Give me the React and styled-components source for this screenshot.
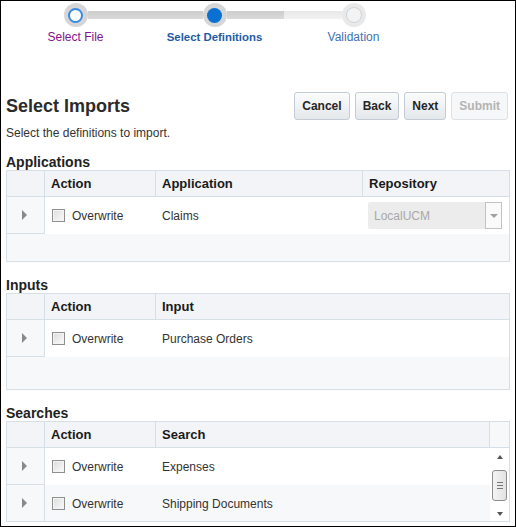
import React from 'react';
import styled, { createGlobalStyle, css } from 'styled-components';

const GlobalStyle = createGlobalStyle`
  body { margin: 0; background: #fff; }
  * { box-sizing: border-box; }
`;

const Frame = styled.div`
  width: 516px;
  height: 527px;
  border: 1px solid #000;
  padding: 0 5px;
  overflow: hidden;
  background: #fff;
  font-family: "Liberation Sans", Arial, sans-serif;
  color: #333;
  font-size: 12px;
`;

// ---- train (wizard steps)
const Train = styled.ol`
  display: flex;
  list-style: none;
  margin: 0;
  padding: 2px 0 0 0;
`;

const Stop = styled.li`
  width: 139px;
  display: flex;
  flex-direction: column;
  align-items: center;
`;

const Track = styled.div`
  width: 100%;
  display: flex;
  align-items: center;
`;

const HalfLine = styled.div`
  flex: 1;
  height: 8px;
  background: ${p =>
    p.$tone === 'done'
      ? 'linear-gradient(#cdcdcd, #d9d9d9)'
      : p.$tone === 'todo'
      ? 'linear-gradient(#e9e9e9, #f1f1f1)'
      : 'transparent'};
`;

const Knob = styled.div`
  width: 24px;
  height: 24px;
  border-radius: 50%;
  background: ${p => (p.$state === 'todo' ? '#e9e9e9' : '#d6d6d6')};
  display: flex;
  align-items: center;
  justify-content: center;
  flex: none;
`;

const Dot = styled.div`
  border-radius: 50%;
  ${p =>
    p.$state === 'visited' &&
    css`
      width: 15px;
      height: 15px;
      background: #fff;
      border: 2px solid #3b8ae0;
    `}
  ${p =>
    p.$state === 'current' &&
    css`
      width: 15px;
      height: 15px;
      background: #0a70d2;
    `}
  ${p =>
    p.$state === 'todo' &&
    css`
      width: 16px;
      height: 16px;
      background: #f3f3f3;
      border: 1px solid #cbd3db;
    `}
`;

const StopLabel = styled.div`
  margin-top: 3px;
  line-height: 14px;
  font-size: ${p => (p.$state === 'current' ? '11.4px' : '12px')};
  font-weight: ${p => (p.$state === 'current' ? 'bold' : 'normal')};
  color: ${p =>
    p.$state === 'visited' ? '#85128a' : p.$state === 'current' ? '#1d5ca4' : '#3f71b2'};
  white-space: nowrap;
`;

// ---- toolbar
const HeaderBar = styled.div`
  margin-top: 48px;
  height: 28px;
  display: flex;
  align-items: center;
  justify-content: space-between;
`;

const Title = styled.h1`
  margin: 0;
  font-size: 18px;
  font-weight: bold;
  color: #2b2b2b;
`;

const ButtonGroup = styled.div`
  display: flex;
  gap: 5px;
  margin-right: 2px;
`;

const Button = styled.button`
  height: 28px;
  padding: 0 7px;
  border: 1px solid ${p => (p.disabled ? '#dde2e6' : '#c3ccd4')};
  border-radius: 3px;
  background: ${p => (p.disabled ? '#f6f7f8' : 'linear-gradient(#fbfcfc, #e4e8eb)')};
  font-family: inherit;
  font-size: 12px;
  font-weight: bold;
  color: ${p => (p.disabled ? '#b3b3b3' : '#262626')};
`;

const Description = styled.p`
  margin: 6px 0 0;
  line-height: 14px;
  font-size: 12px;
  color: #333;
`;

const SectionTitle = styled.h2`
  margin: ${p => (p.$first ? '14px' : '15px')} 0 0;
  font-size: 14px;
  line-height: 16px;
  font-weight: bold;
  color: #222;
`;

// ---- tables
const Table = styled.div`
  border: 1px solid #d6dfe6;
  background: #f7f8fa;
`;

const HeadRow = styled.div`
  display: grid;
  grid-template-columns: ${p => p.$cols};
  height: 26px;
  background: #f2f4f7;
  border-bottom: 1px solid #d6dfe6;
`;

const HeadCell = styled.div`
  display: flex;
  align-items: center;
  padding-left: 6px;
  font-size: 13px;
  font-weight: bold;
  color: #1a1a1a;
  border-right: ${p => (p.$last ? 'none' : '1px solid #d6dfe6')};
  background: ${p => (p.$blank ? '#f7f8fa' : 'transparent')};
`;

const Row = styled.div`
  display: grid;
  grid-template-columns: ${p => p.$cols};
  height: 37px;
  background: ${p => (p.$striped ? '#f7f8fa' : '#fff')};
`;

const ExpandCell = styled.div`
  display: flex;
  align-items: center;
  justify-content: center;
  background: #f7f8fa;
  border-right: 1px solid #d6dfe6;
  border-bottom: 1px solid #d6dfe6;
  padding-right: 2px;
`;

const Disclose = styled.span`
  width: 0;
  height: 0;
  border-top: 5px solid transparent;
  border-bottom: 5px solid transparent;
  border-left: 5px solid #8a8a8a;
`;

const Cell = styled.div`
  display: flex;
  align-items: center;
  padding-left: ${p => p.$pad || '6px'};
  color: #333;
  font-size: 12px;
`;

const Check = styled.span`
  width: 13px;
  height: 13px;
  border: 1px solid #8e8f8f;
  background: linear-gradient(135deg, #dcdcdc, #fbfbfb);
  box-shadow: inset 0 0 0 1px #f4f4f4;
  margin-right: 7px;
  flex: none;
`;

const Filler = styled.div`
  height: ${p => p.$h}px;
`;

const Select = styled.div`
  flex: 1;
  margin-right: 7px;
  height: 27px;
  display: flex;
  align-items: center;
  justify-content: space-between;
  background: #ececec;
  border-radius: 2px;
  color: #a8a8a8;
  padding-left: 6px;
`;

const SelectButton = styled.span`
  width: 17px;
  height: 27px;
  border: 1px solid #c2c2c2;
  background: #fafafa;
  display: flex;
  align-items: center;
  justify-content: center;
  &::after {
    content: '';
    border-left: 4px solid transparent;
    border-right: 4px solid transparent;
    border-top: 4px solid #a0a0a0;
  }
`;

const ScrollBody = styled.div`
  display: flex;
  height: 73px;
  overflow: hidden;
`;

const Rows = styled.div`
  flex: 1;
`;

const ScrollBar = styled.div`
  width: 19px;
  background: #fff;
  display: flex;
  flex-direction: column;
  align-items: center;
  justify-content: space-between;
  padding: 7px 0 5px;
`;

const Arrow = styled.span`
  width: 0;
  height: 0;
  border-left: 3px solid transparent;
  border-right: 3px solid transparent;
  ${p => (p.$up ? 'border-bottom: 4px solid #555;' : 'border-top: 4px solid #555;')}
`;

const Thumb = styled.div`
  width: 15px;
  height: 31px;
  border: 1px solid #8d8d8d;
  border-radius: 3px;
  background: linear-gradient(90deg, #f4f4f4, #e2e2e2);
  display: flex;
  flex-direction: column;
  align-items: center;
  justify-content: center;
  gap: 2px;
  & > i {
    width: 6px;
    height: 1px;
    background: #777;
  }
`;

const steps = [
  { label: 'Select File', state: 'visited', left: null, right: 'done' },
  { label: 'Select Definitions', state: 'current', left: 'done', right: 'done' },
  { label: 'Validation', state: 'todo', left: 'todo', right: null },
];

const ActionCells = () => (
  <>
    <ExpandCell>
      <Disclose />
    </ExpandCell>
    <Cell $pad="7px">
      <Check />
      Overwrite
    </Cell>
  </>
);

const APP_COLS = '38px 111px 207px 1fr';
const INPUT_COLS = '38px 111px 1fr';
const SEARCH_HEAD = '38px 111px 1fr 19px';

export default function App() {
  return (
    <>
      <GlobalStyle />
      <Frame>
        <Train>
          {steps.map(s => (
            <Stop key={s.label}>
              <Track>
                <HalfLine $tone={s.left} />
                <Knob $state={s.state}>
                  <Dot $state={s.state} />
                </Knob>
                <HalfLine $tone={s.right} />
              </Track>
              <StopLabel $state={s.state}>{s.label}</StopLabel>
            </Stop>
          ))}
        </Train>

        <HeaderBar>
          <Title>Select Imports</Title>
          <ButtonGroup>
            <Button>Cancel</Button>
            <Button>Back</Button>
            <Button>Next</Button>
            <Button disabled>Submit</Button>
          </ButtonGroup>
        </HeaderBar>
        <Description>Select the definitions to import.</Description>

        <SectionTitle $first>Applications</SectionTitle>
        <Table>
          <HeadRow $cols={APP_COLS}>
            <HeadCell />
            <HeadCell>Action</HeadCell>
            <HeadCell>Application</HeadCell>
            <HeadCell $last>Repository</HeadCell>
          </HeadRow>
          <Row $cols={APP_COLS}>
            <ActionCells />
            <Cell>Claims</Cell>
            <Cell $pad="5px">
              <Select>
                LocalUCM
                <SelectButton />
              </Select>
            </Cell>
          </Row>
          <Filler $h={27} />
        </Table>

        <SectionTitle>Inputs</SectionTitle>
        <Table>
          <HeadRow $cols={INPUT_COLS}>
            <HeadCell />
            <HeadCell>Action</HeadCell>
            <HeadCell $last>Input</HeadCell>
          </HeadRow>
          <Row $cols={INPUT_COLS}>
            <ActionCells />
            <Cell>Purchase Orders</Cell>
          </Row>
          <Filler $h={32} />
        </Table>

        <SectionTitle>Searches</SectionTitle>
        <Table>
          <HeadRow $cols={SEARCH_HEAD}>
            <HeadCell />
            <HeadCell>Action</HeadCell>
            <HeadCell>Search</HeadCell>
            <HeadCell $last $blank />
          </HeadRow>
          <ScrollBody>
            <Rows>
              {['Expenses', 'Shipping Documents'].map((name, i) => (
                <Row key={name} $cols={INPUT_COLS} $striped={i % 2 === 1}>
                  <ActionCells />
                  <Cell>{name}</Cell>
                </Row>
              ))}
            </Rows>
            <ScrollBar>
              <Arrow $up />
              <Thumb>
                <i />
                <i />
                <i />
              </Thumb>
              <Arrow />
            </ScrollBar>
          </ScrollBody>
        </Table>
      </Frame>
    </>
  );
}
